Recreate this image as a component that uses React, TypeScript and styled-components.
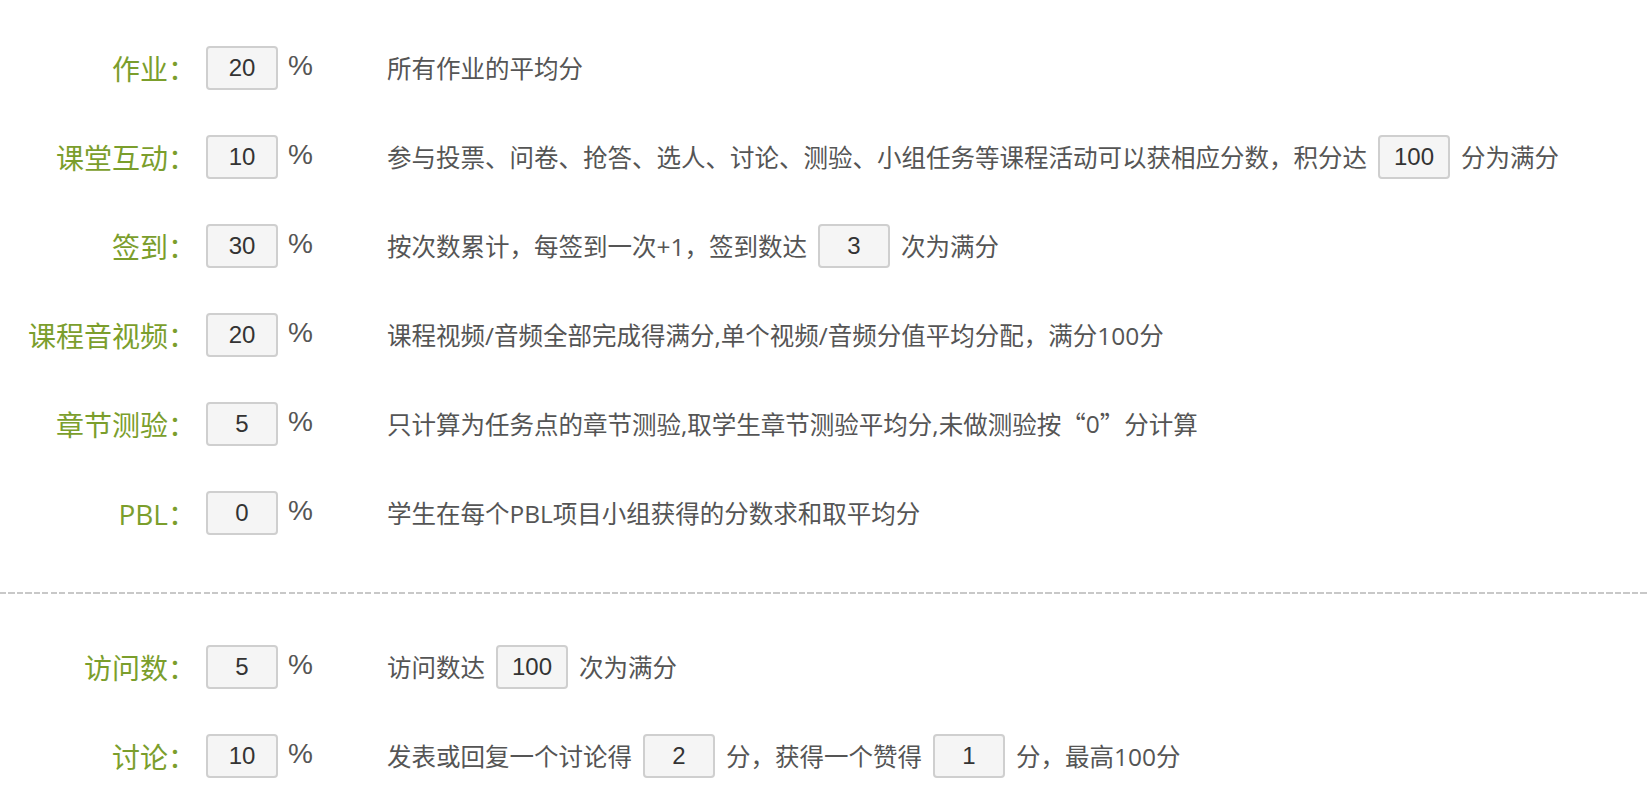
import React from "react";
import styled, { createGlobalStyle } from "styled-components";

const Global = createGlobalStyle`
  html, body { margin: 0; padding: 0; background: #fff; }
  body { font-family: "Open Sans", "Noto Sans CJK SC", sans-serif; }
`;

const Page = styled.div`
  padding-top: 23px;
  width: 1649px;
`;

const Section = styled.div`
  display: flex;
  flex-direction: column;
`;

const Row = styled.div`
  display: flex;
  align-items: center;
  height: 89px;
`;

const Label = styled.div`
  width: 196px;
  margin-right: 10px;
  text-align: right;
  color: #7b9e2c;
  font-size: 28px;
  font-family: "Open Sans", "Noto Sans CJK SC", sans-serif;
  white-space: nowrap;
`;

const Box = styled.input<{ $inline?: boolean }>`
  box-sizing: border-box;
  width: 72px;
  height: 44px;
  margin: ${(p) => (p.$inline ? "0 11px" : "0")};
  padding: 0;
  border: 2px solid #cfcfcf;
  border-radius: 4px;
  background: #f5f5f5;
  color: #333;
  font-family: "Liberation Sans", Arial, sans-serif;
  font-size: 24px;
  text-align: center;
  outline: none;
  vertical-align: middle;
`;

const Percent = styled.span`
  width: 99px;
  margin-left: 10px;
  margin-top: -4px;
  color: #555;
  font-family: "Liberation Sans", Arial, sans-serif;
  font-size: 28px;
`;

const Desc = styled.div`
  display: flex;
  align-items: center;
  color: #555;
  font-size: 24.5px;
  white-space: nowrap;
`;

const Cjk = styled.span`
  font-family: "Noto Sans CJK SC", sans-serif;
`;

const Divider = styled.div`
  height: 2px;
  margin: 35px 0 28px;
  background: repeating-linear-gradient(
    to right,
    #c8c8c8 0,
    #c8c8c8 6px,
    transparent 6px,
    transparent 8.5px
  );
`;

type Item = {
  label: string;
  value: string;
  desc: React.ReactNode;
};

const Field = ({ v }: { v: string }) => <Box $inline defaultValue={v} readOnly />;

const top: Item[] = [
  { label: "作业：", value: "20", desc: "所有作业的平均分" },
  {
    label: "课堂互动：",
    value: "10",
    desc: (
      <>
        参与投票、问卷、抢答、选人、讨论、测验、小组任务等课程活动可以获相应分数，积分达
        <Field v="100" />
        分为满分
      </>
    ),
  },
  {
    label: "签到：",
    value: "30",
    desc: (
      <>
        按次数累计，每签到一次+1，签到数达
        <Field v="3" />
        次为满分
      </>
    ),
  },
  {
    label: "课程音视频：",
    value: "20",
    desc: "课程视频/音频全部完成得满分,单个视频/音频分值平均分配，满分100分",
  },
  {
    label: "章节测验：",
    value: "5",
    desc: (
      <>
        只计算为任务点的章节测验,取学生章节测验平均分,未做测验按<Cjk>“</Cjk>0<Cjk>”</Cjk>分计算
      </>
    ),
  },
  { label: "PBL：", value: "0", desc: "学生在每个PBL项目小组获得的分数求和取平均分" },
];

const bottom: Item[] = [
  {
    label: "访问数：",
    value: "5",
    desc: (
      <>
        访问数达
        <Field v="100" />
        次为满分
      </>
    ),
  },
  {
    label: "讨论：",
    value: "10",
    desc: (
      <>
        发表或回复一个讨论得
        <Field v="2" />
        分，获得一个赞得
        <Field v="1" />
        分，最高100分
      </>
    ),
  },
];

const Rows = ({ items }: { items: Item[] }) => (
  <Section>
    {items.map((it) => (
      <Row key={it.label}>
        <Label>{it.label}</Label>
        <Box defaultValue={it.value} readOnly />
        <Percent>%</Percent>
        <Desc>{it.desc}</Desc>
      </Row>
    ))}
  </Section>
);

export default function App() {
  return (
    <Page>
      <Global />
      <Rows items={top} />
      <Divider />
      <Rows items={bottom} />
    </Page>
  );
}
